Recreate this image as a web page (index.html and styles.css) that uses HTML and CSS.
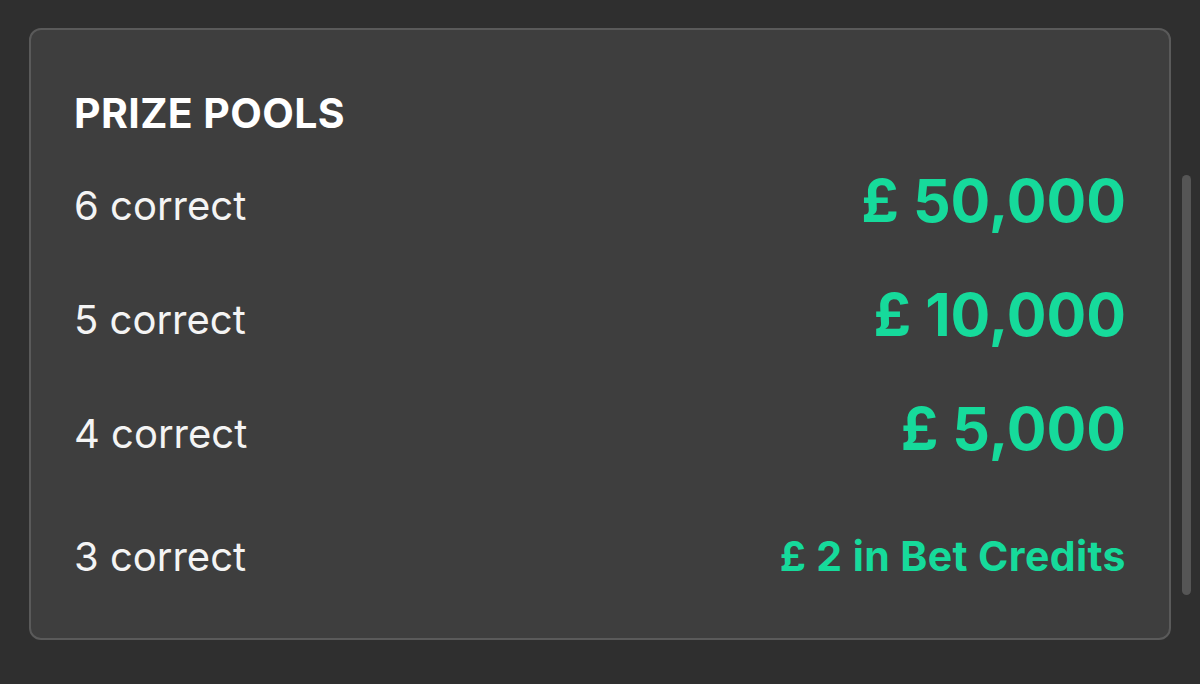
FILE: index.html
```html
<!DOCTYPE html>
<html>
<head>
<meta charset="utf-8">
<link rel="stylesheet" href="styles.css">
</head>
<body>
<div class="page">
  <section class="card">
    <h2 class="title">PRIZE POOLS</h2>
    <div class="row"><span class="label">6 correct</span><span class="amount">£ 50,000</span></div>
    <div class="row"><span class="label">5 correct</span><span class="amount">£ 10,000</span></div>
    <div class="row"><span class="label">4 correct</span><span class="amount">£ 5,000</span></div>
    <div class="row row-last"><span class="label">3 correct</span><span class="amount amount-small">£ 2 in Bet Credits</span></div>
  </section>
  <div class="scrollbar"></div>
</div>
</body>
</html>
```

FILE: styles.css
```css
html, body {
  margin: 0;
  padding: 0;
  background: #2f2f2f;
  width: 1200px;
  height: 684px;
  overflow: hidden;
  font-family: Inter, "Noto Sans", sans-serif;
}
.page {
  position: relative;
  padding: 28px 0 0 29px;
}
.card {
  box-sizing: border-box;
  width: 1142px;
  height: 612px;
  background: #3e3e3e;
  border: 2px solid #5a5a5a;
  border-radius: 12px;
  padding: 63px 43px 0 43px;
}
.title {
  margin: 0 0 30px;
  color: #ffffff;
  font-size: 41px;
  font-weight: 700;
  line-height: 40px;
  letter-spacing: 0.4px;
}
.row {
  display: flex;
  justify-content: space-between;
  align-items: baseline;
  height: 114px;
}
.row-last {
  margin-top: 26px;
}
.label {
  color: #f4f4f4;
  font-size: 40px;
  font-weight: 400;
}
.amount {
  color: #16da9b;
  font-size: 59px;
  font-weight: 700;
  position: relative;
  top: 2px;
}
.amount-small {
  font-size: 41px;
  font-weight: 700;
  letter-spacing: 0.4px;
  top: 0;
}
.scrollbar {
  position: absolute;
  left: 1182px;
  top: 175px;
  width: 9px;
  height: 420px;
  border-radius: 5px;
  background: #555555;
}
```
